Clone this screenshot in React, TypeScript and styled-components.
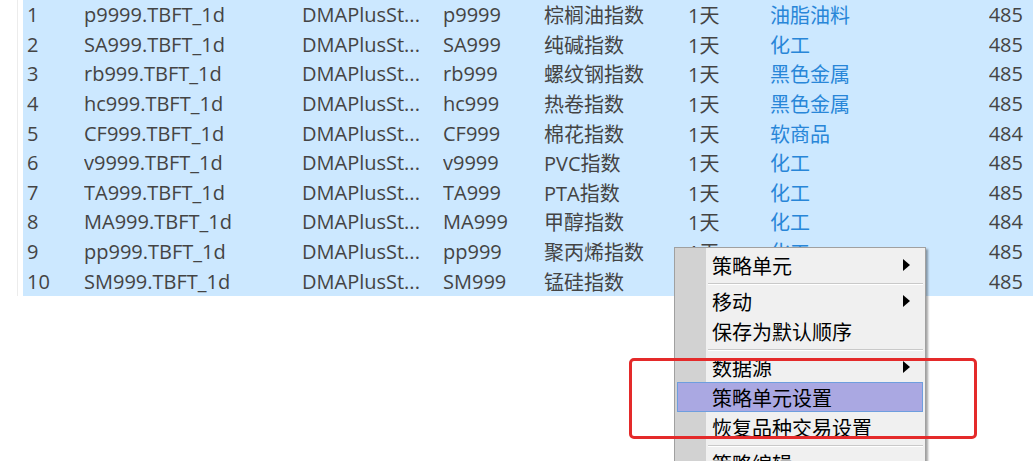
import React from "react";
import styled, { createGlobalStyle } from "styled-components";

// Style

const GlobalStyle = createGlobalStyle`
  html, body {
    margin: 0;
    padding: 0;
    background: #ffffff;
  }
  body {
    font-family: "Open Sans", "Noto Sans CJK SC", sans-serif;
  }
`;

const Page = styled.div`
  position: relative;
  width: 1033px;
  height: 461px;
  overflow: hidden;
  background: #ffffff;
`;

const Table = styled.div`
  margin-left: 17px;
  padding-left: 5px;
  border-left: 1px solid #ececec;
  display: flex;
  flex-direction: column;
`;

const Row = styled.div`
  display: grid;
  grid-template-columns: 57px 218px 141px 101px 144px 82px 1fr auto;
  align-items: center;
  height: 29.6px;
  padding-left: 4px;
  padding-right: 10px;
  background: #cce8ff;
  font-size: 20px;
  color: #444444;
  white-space: nowrap;
`;

const Cell = styled.div<{ $blue?: boolean; $right?: boolean }>`
  overflow: hidden;
  color: ${(p) => (p.$blue ? "#2886d8" : "inherit")};
  text-align: ${(p) => (p.$right ? "right" : "left")};
  font-family: "Open Sans", "Noto Sans CJK SC", sans-serif;
`;

const Menu = styled.div`
  position: absolute;
  left: 674px;
  top: 247px;
  width: 252px;
  height: 240px;
  padding: 2px;
  box-sizing: border-box;
  background: linear-gradient(to right, #d2d2d2 0, #d2d2d2 31px, #f0f0f0 31px);
  border: 1px solid #a0a0a0;
  box-shadow: 2px 2px 2px rgba(0, 0, 0, 0.35);
  font-family: "Noto Sans CJK SC", sans-serif;
  font-size: 20px;
  color: #000000;
`;

const MenuItem = styled.div<{ $active?: boolean }>`
  position: relative;
  display: flex;
  align-items: center;
  height: 30px;
  box-sizing: border-box;
  padding-left: 34px;
  border: 1px solid ${(p) => (p.$active ? "#6e9ede" : "transparent")};
  background: ${(p) => (p.$active ? "#aaa8e2" : "transparent")};
`;

const Arrow = styled.span`
  position: absolute;
  right: 12px;
  top: 50%;
  transform: translateY(-50%);
  width: 0;
  height: 0;
  border-top: 6px solid transparent;
  border-bottom: 6px solid transparent;
  border-left: 7px solid #000000;
`;

const Separator = styled.div`
  height: 6px;
  margin-left: 31px;
  display: flex;
  align-items: center;
  &::after {
    content: "";
    flex: 1;
    height: 1px;
    background: #c9c9c9;
    box-shadow: 0 1px 0 #ffffff;
  }
`;

const Highlight = styled.div`
  position: absolute;
  left: 629px;
  top: 358px;
  width: 348px;
  height: 81px;
  box-sizing: border-box;
  border: 3px solid #e42a2a;
  border-radius: 5px;
`;

// data

const rows = [
  ["1", "p9999.TBFT_1d", "p9999", "棕榈油指数", "油脂油料", "485"],
  ["2", "SA999.TBFT_1d", "SA999", "纯碱指数", "化工", "485"],
  ["3", "rb999.TBFT_1d", "rb999", "螺纹钢指数", "黑色金属", "485"],
  ["4", "hc999.TBFT_1d", "hc999", "热卷指数", "黑色金属", "485"],
  ["5", "CF999.TBFT_1d", "CF999", "棉花指数", "软商品", "484"],
  ["6", "v9999.TBFT_1d", "v9999", "PVC指数", "化工", "485"],
  ["7", "TA999.TBFT_1d", "TA999", "PTA指数", "化工", "485"],
  ["8", "MA999.TBFT_1d", "MA999", "甲醇指数", "化工", "484"],
  ["9", "pp999.TBFT_1d", "pp999", "聚丙烯指数", "化工", "485"],
  ["10", "SM999.TBFT_1d", "SM999", "锰硅指数", "化工", "485"],
];

// render

export default function App() {
  return (
    <Page>
      <GlobalStyle />
      <Table>
        {rows.map(([n, unit, code, name, cat, count]) => (
          <Row key={n}>
            <Cell>{n}</Cell>
            <Cell>{unit}</Cell>
            <Cell>DMAPlusSt...</Cell>
            <Cell>{code}</Cell>
            <Cell>{name}</Cell>
            <Cell>1天</Cell>
            <Cell $blue>{cat}</Cell>
            <Cell $right>{count}</Cell>
          </Row>
        ))}
      </Table>

      <Menu>
        <MenuItem>
          策略单元
          <Arrow />
        </MenuItem>
        <Separator />
        <MenuItem>
          移动
          <Arrow />
        </MenuItem>
        <MenuItem>保存为默认顺序</MenuItem>
        <Separator />
        <MenuItem>
          数据源
          <Arrow />
        </MenuItem>
        <MenuItem $active>策略单元设置</MenuItem>
        <MenuItem>恢复品种交易设置</MenuItem>
        <Separator />
        <MenuItem>策略编辑</MenuItem>
      </Menu>

      <Highlight />
    </Page>
  );
}
